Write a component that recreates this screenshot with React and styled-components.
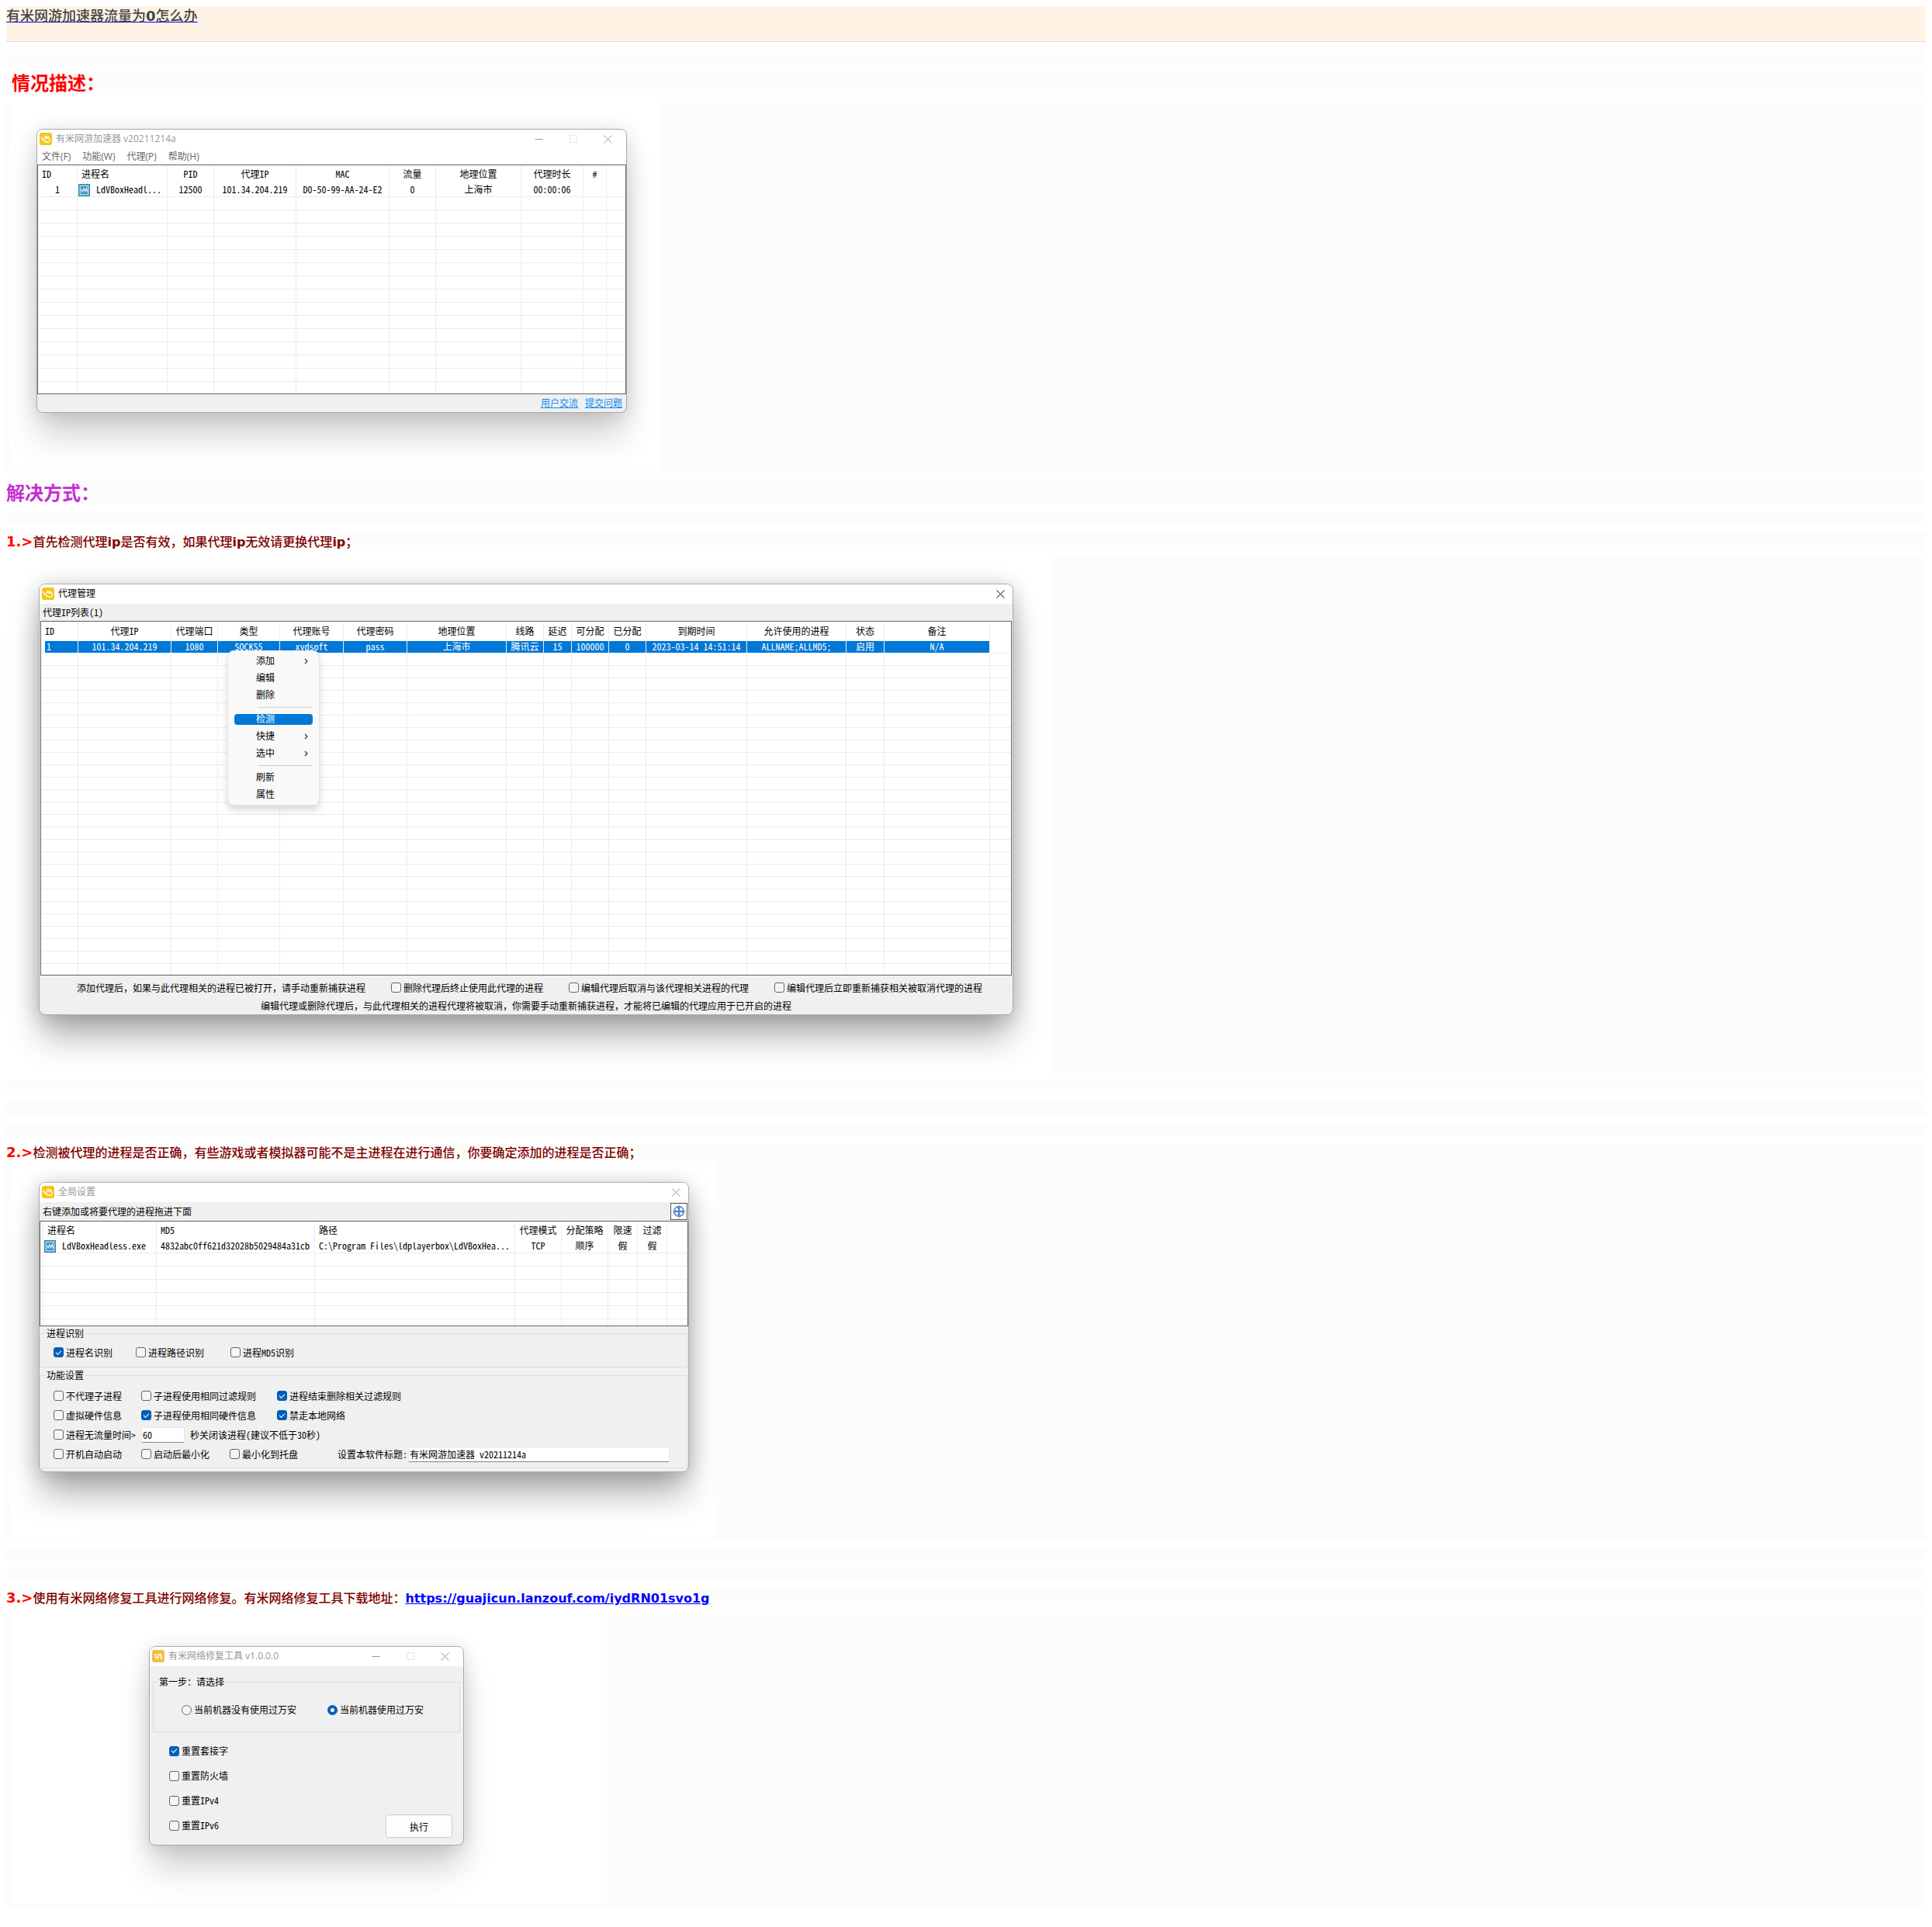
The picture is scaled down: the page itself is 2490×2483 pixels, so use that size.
// App.jsx
import React, { Fragment, useState } from 'react';
import styled, { createGlobalStyle, css } from 'styled-components';

const ACCELERATOR_COLUMNS = [
  { name: 'ID', width: 51, align: 'left' },
  { name: '进程名', width: 116, align: 'left' },
  { name: 'PID', width: 60 },
  { name: '代理IP', width: 106 },
  { name: 'MAC', width: 120 },
  { name: '流量', width: 60 },
  { name: '地理位置', width: 110 },
  { name: '代理时长', width: 80 },
  { name: '#', width: 30 },
  { name: '' },
];

const PROXY_COLUMNS = [
  { name: 'ID', width: 48, align: 'left' },
  { name: '代理IP', width: 120 },
  { name: '代理端口', width: 60 },
  { name: '类型', width: 80 },
  { name: '代理账号', width: 82 },
  { name: '代理密码', width: 82 },
  { name: '地理位置', width: 128 },
  { name: '线路', width: 48 },
  { name: '延迟', width: 36 },
  { name: '可分配', width: 48 },
  { name: '已分配', width: 48 },
  { name: '到期时间', width: 130 },
  { name: '允许使用的进程', width: 128 },
  { name: '状态', width: 49 },
  { name: '备注', width: 136 },
  { name: '' },
];

const PROXY_ROW = [
  '1',
  '101.34.204.219',
  '1080',
  'SOCKS5',
  'xydsoft',
  'pass',
  '上海市',
  '腾讯云',
  '15',
  '100000',
  '0',
  '2023-03-14 14:51:14',
  'ALLNAME;ALLMD5;',
  '启用',
  'N/A',
  '',
];

const PROCESS_COLUMNS = [
  { name: '', width: 4 },
  { name: '进程名', width: 146, align: 'left' },
  { name: 'MD5', width: 204, align: 'left' },
  { name: '路径', width: 258, align: 'left' },
  { name: '代理模式', width: 60 },
  { name: '分配策略', width: 60 },
  { name: '限速', width: 38 },
  { name: '过滤', width: 38 },
  { name: '' },
];

const MENU_GROUPS = [
  [{ name: '添加', more: true }, { name: '编辑' }, { name: '删除' }],
  [
    { name: '检测', active: true },
    { name: '快捷', more: true },
    { name: '选中', more: true },
  ],
  [{ name: '刷新' }, { name: '属性' }],
];

const YoumiIcon = () => (
  <svg width="16" height="16" viewBox="0 0 16 16" aria-hidden="true">
    <rect width="16" height="16" rx="3" fill="#f5c518" />
    <path
      d="M5.4 8.6 L8 4.2 L9.4 7.8 L11.2 5 L13.6 11"
      fill="none"
      stroke="#fff"
      strokeWidth="1.4"
      strokeLinejoin="round"
    />
    <path
      d="M2 5.4 C3 9.4 6.4 12 12.6 12.6"
      fill="none"
      stroke="#fff"
      strokeWidth="1.5"
    />
  </svg>
);

const RepairIcon = () => (
  <svg width="16" height="16" viewBox="0 0 16 16" aria-hidden="true">
    <rect width="16" height="16" rx="3" fill="#f5bf42" />
    <path
      d="M4.4 5 V8.6 Q4.4 10.4 6.2 10.4 Q8 10.4 8 8.6 V7.4 Q8 5.6 9.8 5.6 Q11.6 5.6 11.6 7.4 V11.4"
      fill="none"
      stroke="#fff"
      strokeWidth="1.8"
    />
  </svg>
);

const ProcessIcon = () => (
  <svg width="15" height="16" viewBox="0 0 15 16" aria-hidden="true">
    <rect x="0.5" y="0.5" width="14" height="15" fill="#6db5d8" stroke="#2f7fa8" />
    <rect x="2.5" y="2.5" width="10" height="11" fill="#4b93bd" stroke="#a7d6ec" />
    <path
      d="M3.5 7 L5 10 L7 6 L8.5 9.6 L10.5 5.5 L11.5 10.5"
      fill="none"
      stroke="#e8f6fc"
      strokeWidth="1.2"
    />
  </svg>
);

const TargetIcon = () => (
  <svg width="20" height="20" viewBox="0 0 20 20" aria-hidden="true">
    <path d="M10 0 V20 M0 10 H20" stroke="#c4c4c4" />
    <circle cx="10" cy="10" r="6.5" fill="#eef4fb" stroke="#4a7fc9" strokeWidth="1.4" />
    <path d="M10 4.5 V15.5 M4.5 10 H15.5" stroke="#4a7fc9" strokeWidth="2" />
    <path d="M8 5.5 H12 M8 14.5 H12 M5.5 8 V12 M14.5 8 V12" stroke="#4a7fc9" />
  </svg>
);

const MinimizeIcon = () => (
  <svg width="11" height="11" viewBox="0 0 11 11" aria-hidden="true">
    <path d="M0.5 5.5 H10.5" stroke="currentColor" />
  </svg>
);

const MaximizeIcon = () => (
  <svg width="11" height="11" viewBox="0 0 11 11" aria-hidden="true">
    <rect x="0.5" y="0.5" width="9" height="9" fill="none" stroke="#e6e6e6" />
  </svg>
);

const CloseIcon = () => (
  <svg width="11" height="11" viewBox="0 0 11 11" aria-hidden="true">
    <path d="M0.5 0.5 L10.5 10.5 M10.5 0.5 L0.5 10.5" stroke="currentColor" fill="none" />
  </svg>
);

const ChevronIcon = () => (
  <svg width="5" height="8" viewBox="0 0 5 8" aria-hidden="true">
    <path d="M1 1 L4 4 L1 7" stroke="#333" fill="none" strokeWidth="1.2" />
  </svg>
);

const Caption = ({ icon, title, active, resizable }) => (
  <TitleBar $active={active}>
    {icon}
    <TitleText>{title}</TitleText>
    {resizable && (
      <>
        <TitleButton type="button" aria-label="最小化" $width={45}>
          <MinimizeIcon />
        </TitleButton>
        <TitleButton type="button" aria-label="最大化" $width={45}>
          <MaximizeIcon />
        </TitleButton>
      </>
    )}
    <TitleButton type="button" aria-label="关闭" $width={resizable ? 42 : 26}>
      <CloseIcon />
    </TitleButton>
  </TitleBar>
);

const DataGrid = ({ columns, rows, height, rowHeight, headHeight, total, selected }) => {
  const blank = Array.from({ length: total - rows.length });

  return (
    <GridFrame $height={height}>
      <Grid $rowHeight={rowHeight} $headHeight={headHeight}>
        <colgroup>
          {columns.map((column, i) => (
            <col key={i} width={column.width} />
          ))}
        </colgroup>
        <thead>
          <tr>
            {columns.map((column, i) => (
              <HeadCell key={i} $align={column.align}>
                {column.name}
              </HeadCell>
            ))}
          </tr>
        </thead>
        <tbody>
          {rows.map((row, r) => (
            <Row key={r} $selected={selected === r}>
              {row.map((value, i) => (
                <Cell key={i} $align={columns[i].align}>
                  {value}
                </Cell>
              ))}
            </Row>
          ))}
          {blank.map((_, r) => (
            <Row key={r}>
              {columns.map((column, i) => (
                <Cell key={i} />
              ))}
            </Row>
          ))}
        </tbody>
      </Grid>
    </GridFrame>
  );
};

const Check = ({ children, defaultChecked }) => {
  const [checked, setChecked] = useState(!!defaultChecked);

  return (
    <Option>
      <Tick
        type="checkbox"
        checked={checked}
        onChange={() => setChecked(!checked)}
      />
      {children}
    </Option>
  );
};

const AcceleratorWindow = () => (
  <Window $width={761}>
    <Caption icon={<YoumiIcon />} title="有米网游加速器 v20211214a" resizable />
    <MenuBar>
      {['文件(F)', '功能(W)', '代理(P)', '帮助(H)'].map((item) => (
        <MenuBarButton key={item} type="button">
          {item}
        </MenuBarButton>
      ))}
    </MenuBar>
    <DataGrid
      columns={ACCELERATOR_COLUMNS}
      height={296}
      headHeight={24}
      rowHeight={17}
      total={16}
      rows={[
        [
          <Center>1</Center>,
          <Process>
            <ProcessIcon />
            LdVBoxHeadl...
          </Process>,
          '12500',
          '101.34.204.219',
          'D0-50-99-AA-24-E2',
          '0',
          '上海市',
          '00:00:06',
          '',
          '',
        ],
      ]}
    />
    <StatusBar>
      <StatusLink href="#chat">用户交流</StatusLink>
      <StatusLink href="#issue">提交问题</StatusLink>
    </StatusBar>
  </Window>
);

const ProxyWindow = () => (
  <Window $width={1256} $deep>
    <Caption icon={<YoumiIcon />} title="代理管理" active />
    <Toolbar $height={22}>代理IP列表(1)</Toolbar>
    <Inset>
      <DataGrid
        columns={PROXY_COLUMNS}
        height={457}
        headHeight={25}
        rowHeight={16}
        total={27}
        selected={0}
        rows={[PROXY_ROW]}
      />
    </Inset>
    <ProxyNotes>
      <NoteRow>
        <span>添加代理后，如果与此代理相关的进程已被打开，请手动重新捕获进程</span>
        <Check>删除代理后终止使用此代理的进程</Check>
        <Check>编辑代理后取消与该代理相关进程的代理</Check>
        <Check>编辑代理后立即重新捕获相关被取消代理的进程</Check>
      </NoteRow>
      <NoteText>
        编辑代理或删除代理后，与此代理相关的进程代理将被取消，你需要手动重新捕获进程，才能将已编辑的代理应用于已开启的进程
      </NoteText>
    </ProxyNotes>
    <ContextMenu>
      {MENU_GROUPS.map((group, i) => (
        <Fragment key={i}>
          {i > 0 && <MenuSeparator />}
          <MenuGroup>
            {group.map((item) => (
              <MenuItem key={item.name} type="button" $active={item.active}>
                {item.name}
                {item.more && <ChevronIcon />}
              </MenuItem>
            ))}
          </MenuGroup>
        </Fragment>
      ))}
    </ContextMenu>
  </Window>
);

const SettingsWindow = () => {
  const [seconds, setSeconds] = useState('60');
  const [title, setTitle] = useState('有米网游加速器 v20211214a');

  return (
    <Window $width={838} $deep>
      <Caption icon={<YoumiIcon />} title="全局设置" />
      <Toolbar $height={24}>
        右键添加或将要代理的进程拖进下面
        <PickButton type="button" aria-label="选择窗口">
          <TargetIcon />
        </PickButton>
      </Toolbar>
      <DataGrid
        columns={PROCESS_COLUMNS}
        height={136}
        headHeight={24}
        rowHeight={17}
        total={7}
        rows={[
          [
            '',
            <Process>
              <ProcessIcon />
              LdVBoxHeadless.exe
            </Process>,
            '4832abc0ff621d32028b5029484a31cb',
            'C:\\Program Files\\ldplayerbox\\LdVBoxHea...',
            'TCP',
            '顺序',
            '假',
            '假',
            '',
          ],
        ]}
      />
      <Group $height={52}>
        <legend>进程识别</legend>
        <Line $columns="106px 122px 1fr" $tall>
          <Check defaultChecked>进程名识别</Check>
          <Check>进程路径识别</Check>
          <Check>进程MD5识别</Check>
        </Line>
      </Group>
      <Group $height={128} $gap>
        <legend>功能设置</legend>
        <Line $columns="113px 175px 1fr">
          <Check>不代理子进程</Check>
          <Check>子进程使用相同过滤规则</Check>
          <Check defaultChecked>进程结束删除相关过滤规则</Check>
        </Line>
        <Line $columns="113px 175px 1fr">
          <Check>虚拟硬件信息</Check>
          <Check defaultChecked>子进程使用相同硬件信息</Check>
          <Check defaultChecked>禁走本地网络</Check>
        </Line>
        <Line $columns="113px 56px 1fr">
          <Check>进程无流量时间&gt;</Check>
          <TextInput
            aria-label="秒数"
            value={seconds}
            onChange={(e) => setSeconds(e.target.value)}
          />
          <AfterInput>秒关闭该进程(建议不低于30秒)</AfterInput>
        </Line>
        <Line $columns="113px 114px 139px 91px 1fr">
          <Check>开机自动启动</Check>
          <Check>启动后最小化</Check>
          <Check>最小化到托盘</Check>
          <label htmlFor="software-title">设置本软件标题:</label>
          <TextInput
            id="software-title"
            value={title}
            onChange={(e) => setTitle(e.target.value)}
          />
        </Line>
      </Group>
    </Window>
  );
};

const RepairWindow = () => {
  const [used, setUsed] = useState(true);

  return (
    <Window $width={406}>
      <Caption icon={<RepairIcon />} title="有米网络修复工具 v1.0.0.0" resizable />
      <StepGroup>
        <legend>第一步：请选择</legend>
        <Option>
          <Radio type="radio" name="used" checked={!used} onChange={() => setUsed(false)} />
          当前机器没有使用过万安
        </Option>
        <Option>
          <Radio type="radio" name="used" checked={used} onChange={() => setUsed(true)} />
          当前机器使用过万安
        </Option>
      </StepGroup>
      <RepairBody>
        <RepairList>
          <Check defaultChecked>重置套接字</Check>
          <Check>重置防火墙</Check>
          <Check>重置IPv4</Check>
          <Check>重置IPv6</Check>
        </RepairList>
        <RunButton type="button">执行</RunButton>
      </RepairBody>
    </Window>
  );
};

const App = () => {
  return (
    <>
      <GlobalStyle />
      <Header>
        <HeaderLink href="#top">
          有米网游加速器流量为<b>0</b>怎么办
        </HeaderLink>
      </Header>
      <Article>
        <Blank />
        <Heading $color="#ff0000" $indent>
          情况描述：
        </Heading>
        <Figure>
          <Picture $pad="34px 41px 74px 34px">
            <AcceleratorWindow />
          </Picture>
        </Figure>
        <Heading $color="#c42dd3">解决方式：</Heading>
        <Blank />
        <Step>
          <StepNumber>1.&gt;</StepNumber>
          首先检测代理<b>ip</b>是否有效，如果代理<b>ip</b>无效请更换代理<b>ip</b>；
        </Step>
        <Figure $flush>
          <Picture $pad="33px 48px 75px 42px">
            <ProxyWindow />
          </Picture>
        </Figure>
        <Blank />
        <Blank />
        <Blank />
        <div>
          <Step>
            <StepNumber>2.&gt;</StepNumber>
            检测被代理的进程是否正确，有些游戏或者模拟器可能不是主进程在进行通信，你要确定添加的进程是否正确；
          </Step>
          <Figure>
            <Picture $pad="27px 32px 84px 37px">
              <SettingsWindow />
            </Picture>
          </Figure>
        </div>
        <Blank />
        <Blank />
        <Step>
          <StepNumber>3.&gt;</StepNumber>
          使用有米网络修复工具进行网络修复。有米网络修复工具下载地址：
          <a href="https://guajicun.lanzouf.com/iydRN01svo1g">
            https://guajicun.lanzouf.com/iydRN01svo1g
          </a>
        </Step>
        <Figure>
          <Picture $pad="41px 184px 75px 179px">
            <RepairWindow />
          </Picture>
        </Figure>
      </Article>
    </>
  );
};

const articleFont = `'DejaVu Sans', 'Noto Sans CJK SC', sans-serif`;
const captionFont = `'Open Sans', 'Noto Sans CJK SC', sans-serif`;
const dialogFont = `'Noto Sans Mono CJK SC', 'Noto Sans CJK SC', monospace`;

const GlobalStyle = createGlobalStyle`
  body {
    margin: 8px;
    background-color: #fff;
    font-family: ${articleFont};
  }

  * {
    box-sizing: border-box;
  }
`;

const Header = styled.header`
  height: 46px;
  margin-bottom: 10px;
  background-color: #fff3e6;
  border-bottom: 1px solid #ddd;
  line-height: 26px;
`;

const HeaderLink = styled.a`
  color: #444;
  font-size: 18px;
  font-weight: 500;
  text-decoration-color: #00f;
  text-decoration-skip-ink: none;
`;

const Article = styled.main`
  display: flex;
  flex-direction: column;
  gap: 10px;
`;

const Blank = styled.div`
  height: 17px;
  background-color: #fcfcfa;
`;

const Heading = styled.h2`
  margin: 0;
  padding-top: 4px;
  padding-left: ${(props) => (props.$indent ? '7px' : '0')};
  background-color: #fcfcfa;
  color: ${(props) => props.$color};
  font-size: 24px;
  line-height: 27px;
`;

const Step = styled.p`
  height: 22px;
  margin: 0;
  background-color: #fcfcfa;
  color: #800000;
  font-size: 16px;
  font-weight: 500;
  line-height: 24px;

  a {
    color: #00f;
    font-weight: bold;
  }
`;

const StepNumber = styled.span`
  color: #f00;
  font-size: 18px;
  font-weight: bold;
  line-height: 18px;
`;

const Figure = styled.div`
  padding: ${(props) => (props.$flush ? '0' : '0 0 3px 5px')};
  background-color: #fcfcfa;
`;

const Picture = styled.div`
  width: fit-content;
  max-width: 100%;
  padding: ${(props) => props.$pad};
  overflow: hidden;
  background-color: #fff;
`;

const Window = styled.section`
  position: relative;
  width: ${(props) => props.$width}px;
  max-width: 100%;
  border: 1px solid #aaa;
  border-radius: 8px;
  background-color: #f0f0f0;
  color: #000;
  font-family: ${dialogFont};
  font-size: 12px;
  line-height: 16px;
  box-shadow: ${(props) =>
    props.$deep
      ? '0 32px 44px -4px rgba(0, 0, 0, 0.3), 0 2px 28px rgba(0, 0, 0, 0.2)'
      : '0 32px 44px -4px rgba(0, 0, 0, 0.19), 0 2px 24px rgba(0, 0, 0, 0.13)'};
`;

const TitleBar = styled.header`
  display: flex;
  align-items: center;
  height: 25px;
  padding: 0 3px 1px;
  border-radius: 7px 7px 0 0;
  background-color: #fff;
  color: ${(props) => (props.$active ? '#000' : '#999')};
  font-family: ${captionFont};
`;

const TitleText = styled.span`
  flex: 1;
  padding-left: 5px;
`;

const TitleButton = styled.button`
  display: flex;
  align-items: center;
  justify-content: center;
  width: ${(props) => props.$width}px;
  height: 24px;
  padding: 0;
  border: none;
  background: none;
  color: inherit;
`;

const MenuBar = styled.nav`
  display: flex;
  gap: 15px;
  height: 20px;
  padding: 0 6px;
  background-color: #fff;
`;

const MenuBarButton = styled.button`
  padding: 0;
  border: none;
  background: none;
  color: #666;
  font-family: ${captionFont};
  font-size: 12px;
  line-height: 20px;
`;

const Toolbar = styled.div`
  display: flex;
  align-items: center;
  justify-content: space-between;
  height: ${(props) => props.$height}px;
  padding: 0 1px 0 4px;
`;

const PickButton = styled.button`
  display: flex;
  width: 22px;
  height: 22px;
  padding: 0;
  border: 1px solid #555;
  background-color: #fff;
`;

const Inset = styled.div`
  padding: 0 1px;
`;

const GridFrame = styled.div`
  height: ${(props) => props.$height}px;
  overflow: hidden;
  border: 1px solid #646464;
  background-color: #fff;
`;

const Grid = styled.table`
  width: 100%;
  table-layout: fixed;
  border-collapse: separate;
  border-spacing: 0;

  th {
    height: ${(props) => props.$headHeight}px;
  }

  td {
    height: ${(props) => props.$rowHeight}px;
  }
`;

const cell = css`
  padding: 0 0 0 ${(props) => (props.$align === 'left' ? '5px' : '0')};
  border-right: 1px solid #ececec;
  font-weight: normal;
  line-height: 14px;
  text-align: ${(props) => props.$align || 'center'};
  white-space: nowrap;

  &:last-child {
    border-right: none;
  }
`;

const HeadCell = styled.th`
  ${cell}
  padding-bottom: 2px;
`;

const Cell = styled.td`
  ${cell}
  border-bottom: 1px solid #ececec;
  vertical-align: top;
`;

const Row = styled.tr`
  ${(props) =>
    props.$selected &&
    css`
      td:not(:last-child) {
        background-color: #0078d7;
        color: #fff;
      }

      td:first-child {
        padding-left: 2px;
        border-left: 5px solid #fff;
      }
    `}
`;

const Center = styled.div`
  padding-right: 5px;
  text-align: center;
`;

const Process = styled.div`
  display: flex;
  gap: 8px;
  height: 16px;
  margin-left: -4px;
`;

const StatusBar = styled.footer`
  display: flex;
  justify-content: flex-end;
  gap: 9px;
  height: 23px;
  padding-right: 5px;
  line-height: 22px;
`;

const StatusLink = styled.a`
  color: #0a8cf0;
`;

const ProxyNotes = styled.footer`
  padding-top: 4px;
  line-height: 23px;
`;

const NoteRow = styled.div`
  display: flex;
  gap: 33px;
  padding-left: 48px;
  white-space: nowrap;
`;

const NoteText = styled.div`
  text-align: center;
`;

const Option = styled.label`
  display: flex;
  align-items: center;
  gap: 3px;
  white-space: nowrap;
`;

const Tick = styled.input`
  appearance: none;
  display: grid;
  place-content: center;
  flex: none;
  width: 13px;
  height: 13px;
  margin: 0;
  border: 1px solid #666;
  border-radius: 3px;
  background-color: #f5f5f5;

  &:checked {
    border-color: #005fb8;
    background-color: #005fb8;
  }

  &:checked::after {
    content: '';
    width: 6px;
    height: 3px;
    margin-bottom: 2px;
    border-bottom: 1px solid #fff;
    border-left: 1px solid #fff;
    transform: rotate(-45deg);
  }
`;

const Radio = styled.input`
  appearance: none;
  flex: none;
  width: 13px;
  height: 13px;
  margin: 0;
  border: 1px solid #666;
  border-radius: 50%;
  background-color: #f5f5f5;

  &:checked {
    border: 4px solid #005fb8;
    background-color: #fff;
  }
`;

// the menu floats over the proxy list
const ContextMenu = styled.div`
  position: absolute;
  top: 85px;
  left: 242px;
  width: 119px;
  padding: 2px 8px;
  border: 1px solid #e4e4e4;
  border-radius: 8px;
  background-color: #f9f9f9;
  box-shadow: 0 6px 10px rgba(0, 0, 0, 0.15);
`;

const MenuGroup = styled.div`
  display: flex;
  flex-direction: column;
  gap: 8px;
  padding: 4px 0;
`;

const MenuSeparator = styled.hr`
  height: 1px;
  margin: 4px 0 4px 30px;
  border: none;
  background-color: #d0d0d0;
`;

const MenuItem = styled.button`
  display: flex;
  align-items: center;
  justify-content: space-between;
  height: 14px;
  padding: 0 6px 0 28px;
  border: none;
  border-radius: 4px;
  background: ${(props) => (props.$active ? '#0078d7' : 'none')};
  color: ${(props) => (props.$active ? '#fff' : '#000')};
  font-family: ${captionFont};
  font-size: 12px;
  line-height: 14px;
`;

const Group = styled.fieldset`
  height: ${(props) => props.$height}px;
  margin: ${(props) => (props.$gap ? '2px' : '1px')} 1px 0 0;
  padding: 6px 22px 0 17px;
  border: 1px solid #dcdcdc;

  legend {
    margin-left: -11px;
    padding: 0 2px;
  }

  &:last-child {
    margin-bottom: 4px;
  }
`;

const Line = styled.div`
  display: grid;
  grid-template-columns: ${(props) => props.$columns};
  align-items: center;
  height: 25px;
  margin-top: ${(props) => (props.$tall ? '-2px' : '0')};
`;

const TextInput = styled.input`
  width: 100%;
  height: 20px;
  padding: 0 1px;
  border: 1px solid #e5e5e5;
  border-bottom-color: #868686;
  border-radius: 2px;
  background-color: #fff;
  font-family: ${dialogFont};
  font-size: 12px;
`;

const AfterInput = styled.span`
  padding-left: 7px;
`;

const StepGroup = styled.fieldset`
  display: flex;
  gap: 40px;
  height: 73px;
  margin: 12px 4px 0;
  padding: 0 0 0 36px;
  border: 1px solid #dcdcdc;

  legend {
    margin-left: -31px;
    padding: 0 2px;
  }
`;

const RepairBody = styled.div`
  display: flex;
  align-items: flex-end;
  justify-content: space-between;
  padding: 8px 14px 9px 25px;
`;

const RepairList = styled.div`
  display: grid;
  grid-auto-rows: 32px;
`;

const RunButton = styled.button`
  width: 86px;
  height: 30px;
  border: 1px solid #ccc;
  border-radius: 4px;
  background-color: #fdfdfd;
  font-family: ${dialogFont};
  font-size: 12px;
`;

export default App;
